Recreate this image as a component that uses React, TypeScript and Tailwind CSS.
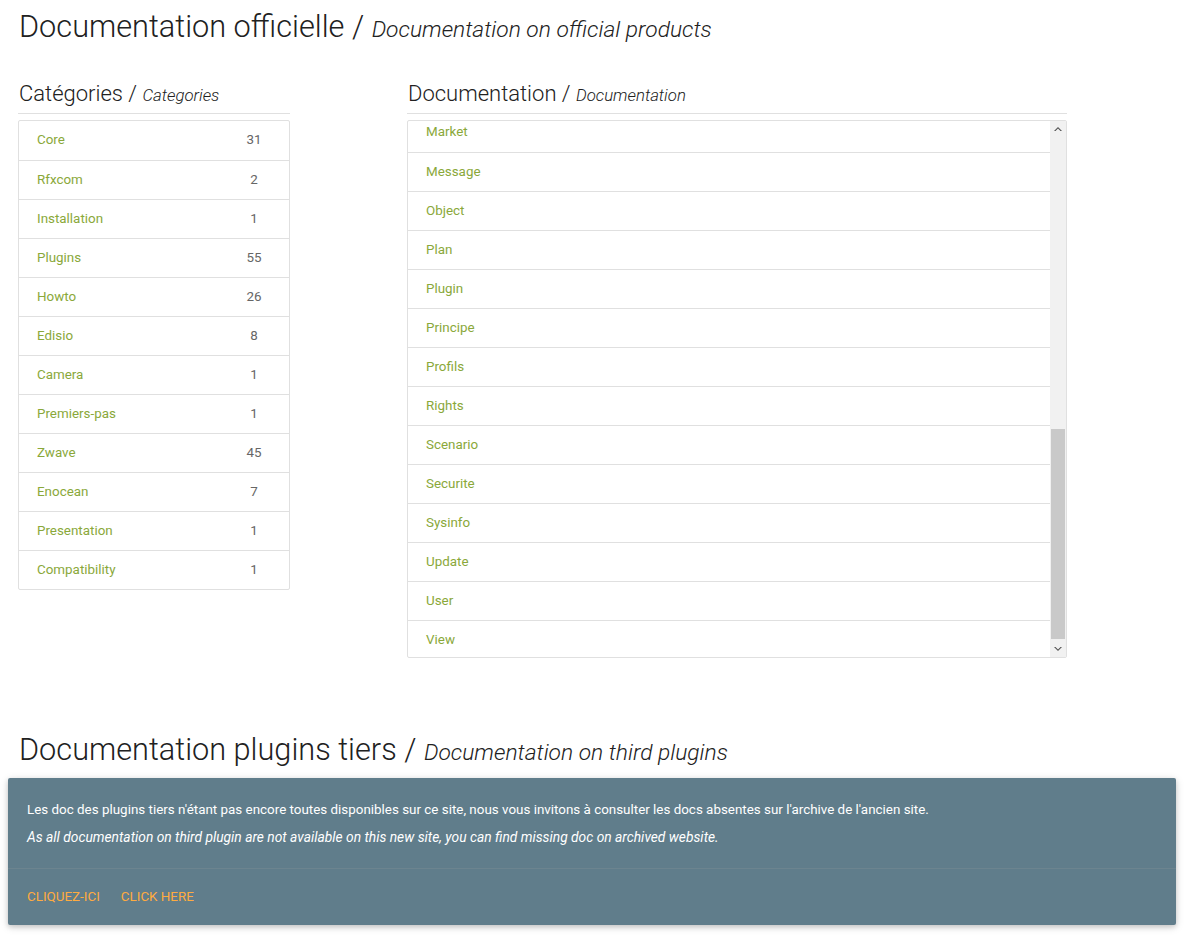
import React from 'react';

const categories = [
  { name: 'Core', count: 31 },
  { name: 'Rfxcom', count: 2 },
  { name: 'Installation', count: 1 },
  { name: 'Plugins', count: 55 },
  { name: 'Howto', count: 26 },
  { name: 'Edisio', count: 8 },
  { name: 'Camera', count: 1 },
  { name: 'Premiers-pas', count: 1 },
  { name: 'Zwave', count: 45 },
  { name: 'Enocean', count: 7 },
  { name: 'Presentation', count: 1 },
  { name: 'Compatibility', count: 1 },
];

const docs = [
  'Market', 'Message', 'Object', 'Plan', 'Plugin', 'Principe', 'Profils',
  'Rights', 'Scenario', 'Securite', 'Sysinfo', 'Update', 'User', 'View',
];

// Bloc titre : texte léger + sous-titre en italique
const SectionTitle: React.FC<{ fr: string; en: string; big?: boolean }> = ({ fr, en, big }) => (
  <h2 className={big ? 'text-[30.7px] font-light text-[#212121] leading-[40px]' : 'text-[22px] font-light text-[#212121] leading-[30px]'}>
    {fr} /{' '}
    <span className={big ? 'italic text-[22.8px]' : 'italic text-[16.8px]'}>{en}</span>
  </h2>
);

const App: React.FC = () => {
  return (
    <div className="bg-white min-h-[941px] text-[13.4px]" style={{ fontFamily: 'Roboto, "Noto Sans", sans-serif' }}>
      <div className="pl-[19px] pt-[7px]">
        <SectionTitle big fr="Documentation officielle" en="Documentation on official products" />
      </div>

      <div className="flex pl-[18px] pt-[29px] gap-[117px]">
        {/* Catégories */}
        <div className="w-[272px]">
          <div className="pl-[1px]">
            <SectionTitle fr="Catégories" en="Categories" />
          </div>
          <div className="h-px bg-[#e0e0e0] mt-[3px] mb-[6px]" />
          <div className="border border-[#e0e0e0] rounded-[2px]">
            {categories.map((c, i) => (
              <div
                key={c.name}
                className={`flex items-center justify-between h-[39px] pl-[18px] pr-[20px] ${i > 0 ? 'border-t border-[#e0e0e0]' : ''}`}
              >
                <span className="text-[#8aa83a]">{c.name}</span>
                <span className="w-[30px] text-center text-[#666]">{c.count}</span>
              </div>
            ))}
          </div>
        </div>

        {/* Documentation */}
        <div className="w-[660px]">
          <div className="pl-[1px]">
            <SectionTitle fr="Documentation" en="Documentation" />
          </div>
          <div className="h-px bg-[#e0e0e0] mt-[3px] mb-[6px]" />
          <div className="flex border border-[#e0e0e0] rounded-[2px] h-[538px] overflow-hidden">
            <div className="flex-1 overflow-hidden">
              <div className="-mt-[8px]">
                {docs.map((d, i) => (
                  <div
                    key={d}
                    className={`flex items-center h-[39px] pl-[18px] ${i > 0 ? 'border-t border-[#e0e0e0]' : ''}`}
                  >
                    <span className="text-[#8aa83a]">{d}</span>
                  </div>
                ))}
              </div>
            </div>
            {/* barre de défilement */}
            <div className="w-[16px] bg-[#f1f1f1] flex flex-col">
              <div className="h-[16px] flex items-center justify-center">
                <svg width="8" height="6" viewBox="0 0 8 6"><path d="M0 5 L4 1 L8 5 L6.5 5 L4 2.5 L1.5 5 Z" fill="#505050" /></svg>
              </div>
              <div className="flex-1 flex flex-col justify-end px-[1px] pb-[2px]">
                <div className="h-[210px] bg-[#c9c9c9]" />
              </div>
              <div className="h-[16px] flex items-center justify-center">
                <svg width="8" height="6" viewBox="0 0 8 6"><path d="M0 1 L4 5 L8 1 L6.5 1 L4 3.5 L1.5 1 Z" fill="#505050" /></svg>
              </div>
            </div>
          </div>
        </div>
      </div>

      <div className="pl-[19px] pt-[72px]">
        <SectionTitle big fr="Documentation plugins tiers" en="Documentation on third plugins" />
      </div>

      <div className="mx-[8px] mt-[5px] bg-[#607d8b] rounded-[2px] shadow-[0_2px_5px_0_rgba(0,0,0,0.16),0_2px_10px_0_rgba(0,0,0,0.12)]">
        <div className="px-[19px] pt-[22px] pb-[21px] text-white">
          <p className="leading-[20px]">Les doc des plugins tiers n'étant pas encore toutes disponibles sur ce site, nous vous invitons à consulter les docs absentes sur l'archive de l'ancien site.</p>
          <p className="italic text-[13.8px] leading-[20px] mt-[7px]">As all documentation on third plugin are not available on this new site, you can find missing doc on archived website.</p>
        </div>
        <div className="border-t border-[rgba(160,160,160,0.2)] px-[19px] h-[57px] flex items-center gap-[21px] text-[#ffab40] uppercase">
          <span>Cliquez-ici</span>
          <span>Click here</span>
        </div>
      </div>
    </div>
  );
};

export default App;
